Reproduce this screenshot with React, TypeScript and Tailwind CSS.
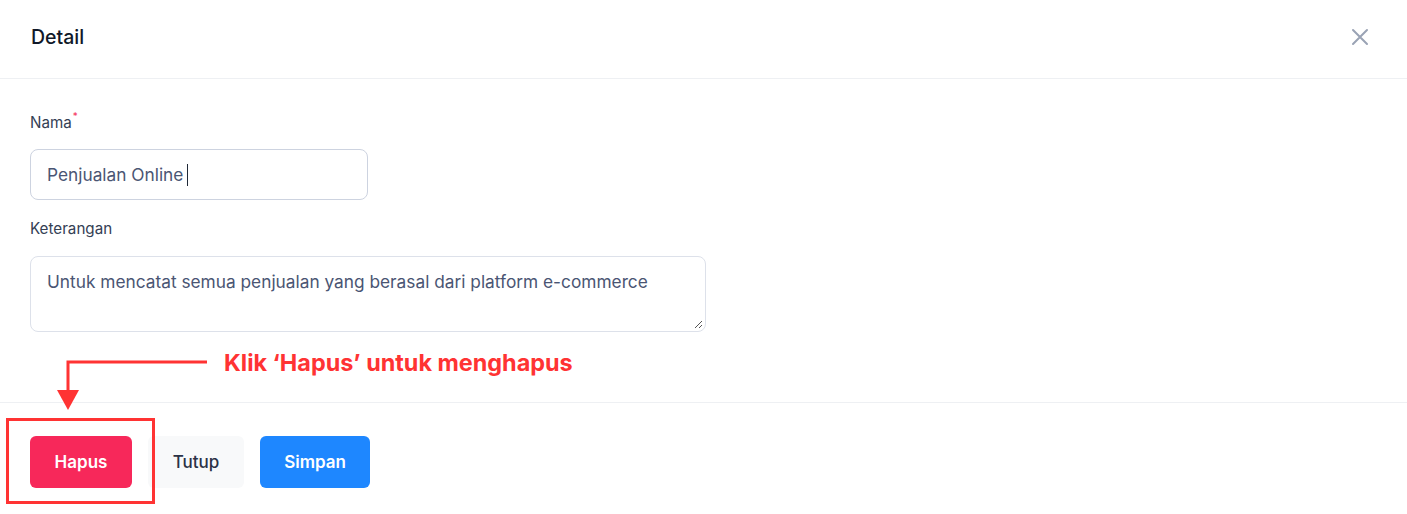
import React from "react";

export default function App() {
  return (
    <div
      className="relative w-[1407px] h-[514px] bg-white overflow-hidden"
      style={{ fontFamily: "Inter, 'Noto Sans', sans-serif" }}
    >
      {/* Header */}
      <div className="flex items-center justify-between h-[79px] pl-[31px] pr-[38px] border-b border-[#eef0f3]">
        <div className="text-[19.5px] font-medium text-[#101828] leading-[24px] -mt-[5px]">Detail</div>
        <svg width="18" height="18" viewBox="0 0 18 18" className="-mt-[4px]">
          <path d="M2 2 L16 16 M16 2 L2 16" stroke="#9aa3b5" strokeWidth="2" strokeLinecap="round" />
        </svg>
      </div>

      {/* Body */}
      <div className="h-[324px] pl-[30px] pt-[34px] border-b border-[#eef0f3]">
        <div className="text-[15.2px] leading-[20px] text-[#344054] flex">
          Nama<span className="text-[#f5325c] text-[10px] leading-[10px] ml-[1px] mt-[-2px]">*</span>
        </div>
        <div className="mt-[16px] w-[338px] h-[51px] rounded-[8px] border border-[#cdd3e0] flex items-center pl-[16px]">
          <span className="text-[17.3px] text-[#4a5573]">Penjualan Online</span>
          <span className="ml-[4px] w-[1px] h-[22px] bg-[#1f2937]" />
        </div>
        <div className="mt-[19px] text-[15.2px] leading-[20px] text-[#344054]">Keterangan</div>
        <div className="relative mt-[17px] w-[676px] h-[76px] rounded-[8px] border border-[#dde1ea] pl-[16px] pt-[13px]">
          <div className="text-[17.3px] leading-[24px] text-[#4a5573]">
            Untuk mencatat semua penjualan yang berasal dari platform e-commerce
          </div>
          <svg width="10" height="10" viewBox="0 0 10 10" className="absolute right-[2px] bottom-[2px]">
            <path d="M9 2 L2 9 M9 6 L6 9" stroke="#555" strokeWidth="1" />
          </svg>
        </div>
      </div>

      {/* Footer */}
      <div className="flex gap-[16px] pl-[30px] pt-[33px]">
        <button className="w-[102px] h-[52px] rounded-[6px] bg-[#f7285a] text-white text-[17px] font-semibold pt-[1px]">
          Hapus
        </button>
        <button className="w-[96px] h-[52px] rounded-[6px] bg-[#f8f9fa] text-[#2b3246] text-[17px] font-medium pt-[1px]">
          Tutup
        </button>
        <button className="w-[110px] h-[52px] rounded-[6px] bg-[#1e87ff] text-white text-[17px] font-semibold pt-[1px]">
          Simpan
        </button>
      </div>

      {/* Annotation overlay */}
      <div className="absolute left-[6px] top-[418px] w-[149px] h-[86px] border-[3px] border-[#ff3333]" />
      <svg className="absolute left-0 top-0" width="260" height="420" viewBox="0 0 260 420">
        <path d="M207 362 L68 362 L68 392" stroke="#ff3333" strokeWidth="3" fill="none" />
        <path d="M57 390 L79 390 L68 410 Z" fill="#ff3333" />
      </svg>
      <div className="absolute left-[224px] top-[348px] text-[23.4px] leading-[30px] font-bold text-[#ff3333] whitespace-nowrap">
        Klik ‘Hapus’ untuk menghapus
      </div>
    </div>
  );
}
